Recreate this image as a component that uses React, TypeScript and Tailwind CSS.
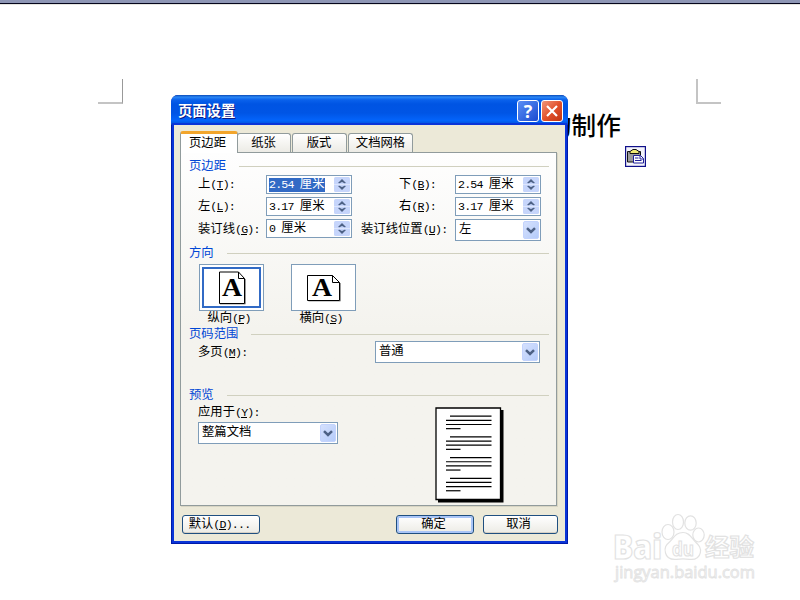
import { ReactNode } from 'react'

function Latin({ children }: { children: ReactNode }) {
  return <span className="text-[11.6px] tracking-[-0.79px] whitespace-pre">{children}</span>
}

// Label with its keyboard shortcut, e.g. 上(T):
function Label({ text, hotkey, end = ':' }: { text: string; hotkey: string; end?: string }) {
  return (
    <span className="whitespace-nowrap pt-[2px]">
      {text}
      <Latin>
        (<span className="border-b border-black inline-block leading-[9px]">{hotkey}</span>){end}
      </Latin>
    </span>
  )
}

function Section({ title }: { title: string }) {
  return (
    <div className="flex items-center h-4 pl-2 pr-[7px]">
      <span className="text-[#0046d5] pt-[3px]">{title}</span>
      <div className="flex-1 ml-[13px] h-px bg-[#d0d0bf]" />
    </div>
  )
}

function Spinner({ value, unit = '厘米', selected = false }: { value: string; unit?: string; selected?: boolean }) {
  return (
    <div className="w-[86px] h-[19px] border border-[#7f9db9] bg-white flex items-center justify-between pl-[2px] pr-px">
      <span className={`leading-[14px] h-[14px] pt-px flex items-center whitespace-pre ${selected ? 'bg-[#316ac5] text-white' : ''}`}>
        <Latin>{value + ' '}</Latin>
        {unit}
      </span>
      <svg width="16" height="15" viewBox="0 0 16 15">
        <rect width="16" height="15" rx="1.5" fill="#c6d5fb" />
        <path d="M0 7.5H16" stroke="#dde6fd" />
        <path d="M4 6 8 2l4 4-1.500.3L8 5 5.500 6.300zM4 9 8 13l4-4-1.500-.3L8 10 5.500 8.700z" fill="#4d6185" />
      </svg>
    </div>
  )
}

function Select({ value, className }: { value: string; className: string }) {
  return (
    <div className={`h-[22px] border border-[#7f9db9] bg-white flex items-center justify-between pl-[3px] pr-px ${className}`}>
      <span className="pt-px">{value}</span>
      <svg width="16" height="18" viewBox="0 0 16 18">
        <defs>
          <linearGradient id="arrow" x1="0" y1="0" x2="1" y2="1">
            <stop offset="0" stopColor="#d6e1fd" />
            <stop offset="1" stopColor="#b4cbfa" />
          </linearGradient>
        </defs>
        <rect x=".5" y=".5" width="15" height="17" rx="1.5" fill="url(#arrow)" stroke="#c3d3fd" />
        <path d="M4 7.2 8 11l4-3.8" fill="none" stroke="#4d6185" strokeWidth="2.5" />
      </svg>
    </div>
  )
}

function Orientation({ landscape = false, selected = false }: { landscape?: boolean; selected?: boolean }) {
  return (
    <div className="w-[65px] flex flex-col items-center">
      <div className="w-[65px] h-[47px] border border-[#7f9db9] bg-white p-[2px]">
        <div className={`w-full h-full flex items-center justify-center ${selected ? 'border-2 border-[#316ac5]' : ''}`}>
          <svg width="36" height="34" viewBox="0 0 36 34" className="shrink-0">
            {landscape ? (
              <>
                <path d="M2.5 30h32V12" fill="none" stroke="#999" />
                <path d="M1.500 4.500H26.500L33.500 11.500V29.500H1.500z" fill="#fff" stroke="#000" />
                <path d="M26.500 4.500V11.500H33.500" fill="none" stroke="#000" />
                <text x="6" y="24.500" fontSize="26" fontWeight="bold" fontFamily="Liberation Serif, serif" textLength="20" lengthAdjust="spacingAndGlyphs">A</text>
              </>
            ) : (
              <>
                <path d="M6 33H31.500V8" fill="none" stroke="#999" />
                <path d="M5.500 1H24.500L30.500 7.500V32.500H5.500z" fill="#fff" stroke="#000" />
                <path d="M24.500 1V7.500H30.500" fill="none" stroke="#000" />
                <text x="8" y="25" fontSize="26" fontWeight="bold" fontFamily="Liberation Serif, serif" textLength="20" lengthAdjust="spacingAndGlyphs">A</text>
              </>
            )}
          </svg>
        </div>
      </div>
      <div className="h-3 flex items-center mt-px -ml-[5px]">
        <Label text={landscape ? '横向' : '纵向'} hotkey={landscape ? 'S' : 'P'} end="" />
      </div>
    </div>
  )
}

function Button({ children, primary = false, className }: { children: ReactNode; primary?: boolean; className: string }) {
  return (
    <button
      className={`h-[19px] rounded-[3px] border border-[#1f4f80] flex items-center justify-center bg-gradient-to-b from-white to-[#ecebe5] ${
        primary ? 'shadow-[inset_0_0_0_2px_#a9c5f7]' : 'shadow-[inset_0_-1px_0_#d6d0c5]'
      } ${className}`}
    >
      {children}
    </button>
  )
}

function PagePreview() {
  const lines = [0, 1, 2, 3].flatMap((block) =>
    [0, 1, 2, 3].map((row) => ({
      x: row === 0 ? 15 : 11,
      end: row === 3 ? 25.5 : 56.5,
      y: 9.2 + block * 20.7 + row * 4.15,
    })),
  )
  return (
    <svg width="69" height="96" viewBox="0 0 69 96">
      <path d="M3 3H68.500V95.500H3z" fill="#000" />
      <path d="M1 1H65.500V92.500H1z" fill="#fff" stroke="#000" strokeWidth="1.3" />
      {lines.map((l) => (
        <path key={l.y} d={`M${l.x} ${l.y}H${l.end}`} stroke="#000" strokeWidth="1.2" />
      ))}
    </svg>
  )
}

function PasteIcon() {
  return (
    <svg width="21" height="21" viewBox="0 0 21 21">
      <rect x=".6" y=".6" width="19.8" height="19.8" fill="#f4f4fb" stroke="#10108a" strokeWidth="1.2" />
      <path d="M2.500 5.500H15.500v10.500H2.500z" fill="#9b9b9b" stroke="#111" />
      <path d="M5 7.500V5.500l3-2h3l3 2v2z" fill="#f2ec72" stroke="#111" />
      <path d="M8.500 9.500H15.500l3 3v4.500H8.500z" fill="#fff" stroke="#21219a" />
      <path d="M15 9.500v3.500h3.500M10 12h3.500M10 14.500h6.500" fill="none" stroke="#21219a" />
    </svg>
  )
}

function Watermark() {
  return (
    <svg width="150" height="78" viewBox="0 0 150 78" fill="#fff" stroke="#e2e2e2" strokeWidth="1.2">
      <text x="2" y="49" fontSize="33" fontWeight="800" fontFamily="Open Sans, sans-serif" textLength="49" lengthAdjust="spacingAndGlyphs">Bai</text>
      <ellipse cx="57" cy="22" rx="6" ry="7.5" />
      <ellipse cx="67" cy="12" rx="5.5" ry="7.5" />
      <ellipse cx="79.500" cy="13" rx="5.7" ry="7.2" />
      <ellipse cx="87.500" cy="25" rx="5.700" ry="7" />
      <path d="M72 22.500c-7 0-9 5-13 9-4 3.500-6 6-4.500 11.500 1.500 6 6.500 6.700 11 6.300 5-.6 8-.6 13 0 5.500.6 9.500-1.200 10.800-6.500 1-5-1.300-7.500-5-11-4-4-5.800-9.300-12.300-9.300z" />
      <text x="61" y="46" fontSize="20" fontWeight="bold" fontFamily="Open Sans, sans-serif" textLength="22" lengthAdjust="spacingAndGlyphs">du</text>
      <text x="94" y="46" fontSize="24" fontWeight="bold" fontFamily="Noto Sans CJK SC, sans-serif" textLength="49" lengthAdjust="spacingAndGlyphs">经验</text>
      <text x="4" y="68" fontSize="16.5" fontFamily="Open Sans, sans-serif" fill="#f6f6f6" strokeWidth=".8" textLength="140" lengthAdjust="spacingAndGlyphs">jingyan.baidu.com</text>
    </svg>
  )
}

function PageSetupDialog() {
  return (
    <div className="w-[397px] h-[449px] rounded-t-[7px] bg-[#0019a8] text-black flex flex-col overflow-hidden">
      <div className="h-[30px] shrink-0 flex items-center pl-[7px] pr-[5px] pt-[2px] bg-[linear-gradient(#0a4ab8_0%,#2b87f5_7%,#0a62ec_16%,#0054e3_30%,#0055e5_60%,#0364fb_85%,#0356e0_94%,#0038b5_100%)]">
        <span className="flex-1 pt-[2px] text-white font-bold text-[14.3px] [text-shadow:1px_1px_0_#0a1883]">页面设置</span>
        <div className="flex gap-[2px]">
          <div className="w-[22px] h-[22px] rounded-[3px] border border-white bg-gradient-to-br from-[#5b8ff5] to-[#1c49d0] text-white font-bold text-[18px] leading-[20px] text-center font-['Open_Sans',sans-serif]">?</div>
          <div className="w-[22px] h-[22px] rounded-[3px] border border-white bg-gradient-to-br from-[#ee9478] via-[#e2512b] to-[#c13411] flex items-center justify-center">
            <svg width="12" height="12" viewBox="0 0 12 12">
              <path d="M1 1 11 11M11 1 1 11" stroke="#fff" strokeWidth="2.2" />
            </svg>
          </div>
        </div>
      </div>

      <div className="flex-1 mx-[3px] mb-[3px] bg-[#ece9d8] flex flex-col shadow-[0_0_0_2px_#0a35d8]">
        {/* Tabs */}
        <div className="h-[27px] flex items-end pl-[6px]">
          <div className="relative z-10 w-[58px] h-[22px] -mb-px rounded-t-[3px] border-x border-[#919b9c] border-t-[3px] border-t-[#f2a52c] bg-white flex items-center justify-center pt-[2px] pr-[3px] -mr-px">页边距</div>
          <div className="w-[54px] h-[19px] rounded-t-[3px] border border-b-0 border-[#919b9c] bg-gradient-to-b from-white to-[#ecebe5] flex items-center justify-center pt-[3px] pr-px mr-[1px]">纸张</div>
          <div className="w-[55px] h-[19px] rounded-t-[3px] border border-b-0 border-[#919b9c] bg-gradient-to-b from-white to-[#ecebe5] flex items-center justify-center pt-[3px] pr-px mr-[1px]">版式</div>
          <div className="w-[65px] h-[19px] rounded-t-[3px] border border-b-0 border-[#919b9c] bg-gradient-to-b from-white to-[#ecebe5] flex items-center justify-center pt-[3px]">文档网格</div>
        </div>

        {/* Tab page */}
        <div className="ml-[6px] w-[377px] h-[354px] border border-[#919b9c] bg-gradient-to-b from-[#fefefe] to-[#f4f3ee] to-50% shadow-[1px_1px_0_#d8d5c4] pt-[5px]">
          <Section title="页边距" />
          <div className="pl-[17px] grid grid-cols-[68px_86px_9px_94px_86px] gap-y-[2.7px] items-start mt-px h-[66px]">
            <div className="h-[19px] flex items-center"><Label text="上" hotkey="T" /></div>
            <Spinner value="2.54" selected />
            <span />
            <div className="h-[19px] flex items-center pl-[38px]"><Label text="下" hotkey="B" /></div>
            <Spinner value="2.54" />
            <div className="h-[19px] flex items-center"><Label text="左" hotkey="L" /></div>
            <Spinner value="3.17" />
            <span />
            <div className="h-[19px] flex items-center pl-[38px]"><Label text="右" hotkey="R" /></div>
            <Spinner value="3.17" />
            <div className="h-[19px] flex items-center pt-px"><Label text="装订线" hotkey="G" /></div>
            <Spinner value="0" />
            <span />
            <div className="h-[19px] flex items-center pt-px"><Label text="装订线位置" hotkey="U" /></div>
            <Select value="左" className="w-[86px]" />
          </div>

          <div className="mt-[4px]">
            <Section title="方向" />
          </div>
          <div className="flex gap-[27px] pl-[18px] mt-[3px]">
            <Orientation selected />
            <Orientation landscape />
          </div>

          <div className="mt-[2px]">
            <Section title="页码范围" />
          </div>
          <div className="flex justify-between pl-[17px] pr-4 -mt-px">
            <div className="h-[22px] flex items-center"><Label text="多页" hotkey="M" /></div>
            <Select value="普通" className="w-[165px]" />
          </div>

          <div className="mt-[24px]">
            <Section title="预览" />
          </div>
          <div className="flex justify-between pl-[17px] pr-[52px]">
            <div>
              <div className="h-[19px] flex items-center"><Label text="应用于" hotkey="Y" /></div>
              <Select value="整篇文档" className="w-[140px]" />
            </div>
            <div className="mt-1">
              <PagePreview />
            </div>
          </div>
        </div>

        <div className="flex pl-[8px] mt-[9px]">
          <Button className="w-[78px] pr-[3px]"><Label text="默认" hotkey="D" end="..." /></Button>
          <Button primary className="w-[78px] ml-[136px] pt-[2px] pr-[3px]">确定</Button>
          <Button className="w-[75px] ml-[9px] pt-[2px] pr-[4px]">取消</Button>
        </div>
      </div>
    </div>
  )
}

function App() {
  return (
    <div className="relative w-[800px] h-[600px] overflow-hidden bg-white font-['Liberation_Mono','Noto_Sans_CJK_SC',monospace] text-[12.33px] leading-none">
      <div className="h-[5px] bg-[#8e96b5] border-b border-[#e6e6e0] flex items-end">
        <div className="h-px w-full bg-[#05051c]" />
      </div>

      {/* Page margin corners */}
      <div className="absolute left-[98px] top-[79px] w-[25px] h-[25px] border-r border-b-2 border-r-[#999] border-b-[#c4c4c4]" />
      <div className="absolute left-[696px] top-[79px] w-[25px] h-[25px] border-l-2 border-b-2 border-[#c4c4c4]" />

      <div className="absolute left-[547px] top-[117px] text-[24.6px] font-medium whitespace-nowrap text-black">的制作</div>
      <div className="absolute left-[625px] top-[146px]"><PasteIcon /></div>
      <div className="absolute left-[611px] top-[510px]"><Watermark /></div>
      <div className="absolute left-[171px] top-[95px]"><PageSetupDialog /></div>
    </div>
  )
}

export default App
